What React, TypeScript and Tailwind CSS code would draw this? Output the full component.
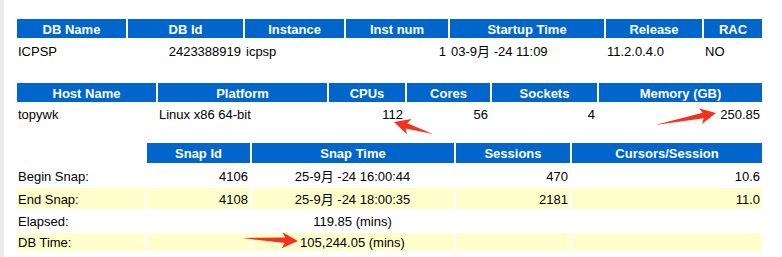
import type { ReactNode } from 'react'

type Align = 'left' | 'right' | 'center'

const FONT = 'font-["Liberation_Sans","Noto_Sans_CJK_SC",Arial,sans-serif]'

function Head({ children }: { children?: ReactNode }) {
  if (!children) return <div />
  return (
    <div className="flex items-center justify-center bg-[#0066cc] pt-[1px] text-[13px] leading-[15px] font-bold text-white whitespace-nowrap">
      {children}
    </div>
  )
}

function Cell({ children, align = 'left', shade = false }: { children?: ReactNode; align?: Align; shade?: boolean }) {
  const justify = align === 'right' ? 'justify-end' : align === 'center' ? 'justify-center' : 'justify-start'
  return (
    <div
      className={`flex items-center ${justify} pt-[1px] pl-[1px] pr-[2px] text-[13px] leading-[15px] text-black whitespace-nowrap ${
        shade ? 'bg-[#ffffcc]' : ''
      }`}
    >
      {children}
    </div>
  )
}

// red marker arrows drawn over the report
function Arrow({ x1, y1, x2, y2 }: { x1: number; y1: number; x2: number; y2: number }) {
  const dx = x2 - x1
  const dy = y2 - y1
  const len = Math.sqrt(dx * dx + dy * dy)
  const deg = (Math.atan2(dy, dx) * 180) / Math.PI
  const pts = [
    [0, 0],
    [len - 13, -2.8],
    [len - 16, -8],
    [len, 0],
    [len - 16, 8],
    [len - 13, 2.8],
  ]
    .map((p) => p.join(','))
    .join(' ')
  return <polygon points={pts} fill="#f5311c" transform={`translate(${x1} ${y1}) rotate(${deg})`} />
}

export default function App() {
  return (
    <div className={`relative flex h-[257px] w-[782px] overflow-hidden bg-white ${FONT}`}>
      <div className="w-[4px] shrink-0 bg-[#ebebeb]" />

      <div className="flex flex-col pl-[13px] pt-[19px]">
        {/* instance info */}
        <div className="grid grid-cols-[109px_115px_99px_102px_154px_96px_58px] grid-rows-[19px_21px] gap-[2px]">
          <Head>DB Name</Head>
          <Head>DB Id</Head>
          <Head>Instance</Head>
          <Head>Inst num</Head>
          <Head>Startup Time</Head>
          <Head>Release</Head>
          <Head>RAC</Head>
          <Cell>ICPSP</Cell>
          <Cell align="right">2423388919</Cell>
          <Cell>icpsp</Cell>
          <Cell align="right">1</Cell>
          <Cell>03-9月 -24 11:09</Cell>
          <Cell>11.2.0.4.0</Cell>
          <Cell>NO</Cell>
        </div>

        {/* host info */}
        <div className="mt-[22px] grid grid-cols-[139px_169px_76px_83px_105px_163px] grid-rows-[19px_20px] gap-[2px]">
          <Head>Host Name</Head>
          <Head>Platform</Head>
          <Head>CPUs</Head>
          <Head>Cores</Head>
          <Head>Sockets</Head>
          <Head>Memory (GB)</Head>
          <Cell>topywk</Cell>
          <Cell>Linux x86 64-bit</Cell>
          <Cell align="right">112</Cell>
          <Cell align="right">56</Cell>
          <Cell align="right">4</Cell>
          <Cell align="right">250.85</Cell>
        </div>

        {/* snapshot info */}
        <div className="mt-[19px] grid grid-cols-[128px_103px_202px_114px_190px] grid-rows-[20px_21px_21px_20px_18px] gap-[2px]">
          <Head />
          <Head>Snap Id</Head>
          <Head>Snap Time</Head>
          <Head>Sessions</Head>
          <Head>Cursors/Session</Head>

          <Cell>Begin Snap:</Cell>
          <Cell align="right">4106</Cell>
          <Cell align="center">25-9月 -24 16:00:44</Cell>
          <Cell align="right">470</Cell>
          <Cell align="right">10.6</Cell>

          <Cell shade>End Snap:</Cell>
          <Cell shade align="right">4108</Cell>
          <Cell shade align="center">25-9月 -24 18:00:35</Cell>
          <Cell shade align="right">2181</Cell>
          <Cell shade align="right">11.0</Cell>

          <Cell>Elapsed:</Cell>
          <Cell />
          <Cell align="center">119.85 (mins)</Cell>
          <Cell />
          <Cell />

          <Cell shade>DB Time:</Cell>
          <Cell shade />
          <Cell shade align="center">105,244.05 (mins)</Cell>
          <Cell shade />
          <Cell shade />
        </div>
      </div>

      <svg className="pointer-events-none absolute inset-0" width={782} height={257}>
        <Arrow x1={433} y1={134} x2={394} y2={122} />
        <Arrow x1={655} y1={125} x2={716} y2={113} />
        <Arrow x1={242} y1={238} x2={298} y2={241} />
      </svg>
    </div>
  )
}
